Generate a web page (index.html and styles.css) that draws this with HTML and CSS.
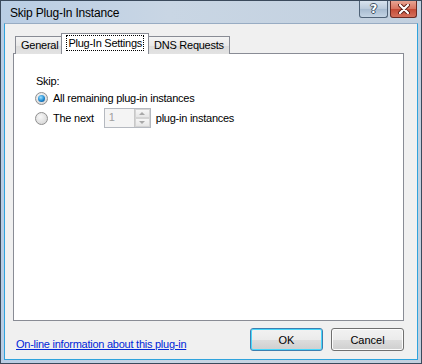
FILE: index.html
```html
<!DOCTYPE html>
<html lang="en">
<head>
  <meta charset="UTF-8" />
  <title>Skip Plug-In Instance</title>
  <link rel="stylesheet" href="styles.css">
</head>
<body>
  <div class="window">
    <div class="titlebar">
      <span class="title">Skip Plug-In Instance</span>
      <div class="caption-btns">
        <span class="cap-btn help">?</span>
        <span class="cap-btn close">
          <svg width="12" height="10" viewBox="0 0 12 10">
            <path d="M2 1 L10 9 M10 1 L2 9" stroke="#5a1a12" stroke-width="4" stroke-linecap="round"/>
            <path d="M2 1 L10 9 M10 1 L2 9" stroke="#fff" stroke-width="2.2" stroke-linecap="round"/>
          </svg>
        </span>
      </div>
    </div>

    <div class="client">
      <div class="tabs">
        <div class="tab">General</div>
        <div class="tab active"><span class="focus">Plug-In Settings</span></div>
        <div class="tab">DNS Requests</div>
      </div>

      <div class="panel">
        <div class="label">Skip:</div>
        <div class="row">
          <span class="radio checked"></span>
          <span>All remaining plug-in instances</span>
        </div>
        <div class="row">
          <span class="radio"></span>
          <span class="next">The next</span>
          <span class="spin">
            <span class="spin-val">1</span>
            <span class="spin-btns">
              <span class="arrow up"></span>
              <span class="arrow down"></span>
            </span>
          </span>
          <span>plug-in instances</span>
        </div>
      </div>

      <div class="footer">
        <a class="link" href="#">On-line information about this plug-in</a>
        <div class="buttons">
          <button class="btn default">OK</button>
          <button class="btn">Cancel</button>
        </div>
      </div>
    </div>
  </div>
</body>
</html>
```
FILE: styles.css
```css
* { box-sizing: border-box; margin: 0; padding: 0 }
html, body {
  width: 422px; height: 364px;
  overflow: hidden;
  background: #fff;
  font-family: 'Liberation Sans', Arial, sans-serif;
  font-size: 11px;
  letter-spacing: -0.25px;
  color: #000;
}

/*–––– Window frame ––––*/
.window {
  width: 422px; height: 364px;
  display: flex; flex-direction: column;
  border: 1px solid #3b4a5c;
  background: linear-gradient(90deg, #b9cde4, #c9d6e4 40%, #c2d0df);
  padding: 0 3px 3px 3px;
}
.titlebar {
  height: 22px;
  display: flex; align-items: flex-start;
  padding-left: 6px;
}
.title {
  font-size: 12px;
  letter-spacing: -0.2px;
  margin-top: 5px;
  color: #000;
}
.caption-btns {
  margin-left: auto;
  display: flex; gap: 2px;
  margin-right: 1px;
}
.cap-btn {
  height: 17px;
  display: flex; align-items: center; justify-content: center;
  border: 1px solid #4f6277;
  border-top: none;
  border-radius: 0 0 3px 3px;
}
.help {
  width: 29px;
  background: linear-gradient(#d8e3ee, #b9c9da 50%, #a7bbd0 51%, #c4d4e4);
  color: #fff;
  font-family: 'DejaVu Sans', sans-serif;
  font-weight: bold;
  font-size: 12px;
  text-shadow: -1px 0 #3e4f62, 1px 0 #3e4f62, 0 -1px #3e4f62, 0 1px #3e4f62;
}
.close {
  width: 27px;
  border-color: #6b2a22;
  background: linear-gradient(#e8a493, #d8725e 50%, #c44a35 51%, #d4705c);
}

/*–––– Client area ––––*/
.client {
  flex: 1;
  display: flex; flex-direction: column;
  background: #f0f0f0;
  border: 1px solid #2fa3dd;
  border-top-color: #98acc3;
  padding: 9px 13px 8px 8px;
}

/*–––– Tabs ––––*/
.tabs {
  display: flex; align-items: flex-end;
  padding-left: 2px;
  height: 21px;
  position: relative; z-index: 1;
  margin-bottom: -1px;
}
.tab {
  height: 18px;
  padding: 2px 5px 0 5px;
  border: 1px solid #898c95;
  border-bottom: none;
  margin-right: -1px;
  background: linear-gradient(#f4f4f4, #e9e9e9 50%, #dcdcdc 51%, #e3e3e3);
}
.tab.active {
  height: 21px;
  margin: 0 -1px 0 -2px;
  padding: 2px 5px 0 5px;
  background: #fff;
}
.focus {
  display: inline-block;
  outline: 1px dotted #000;
  padding: 0 1px;
  line-height: 14px;
}

.panel {
  flex: 1;
  background: #fff;
  border: 1px solid #898c95;
  padding: 21px 22px;
}
.label { margin-bottom: 0; line-height: 13px; }
.row {
  display: flex; align-items: center;
  height: 20px;
}
.row span { white-space: nowrap; }

/*–––– Radio ––––*/
.radio {
  width: 13px; height: 13px;
  flex: none;
  border-radius: 50%;
  border: 1px solid #8f8f8f;
  background: radial-gradient(circle at 40% 35%, #f8f8f8, #dcdcdc 70%, #c8c8c8);
  margin: 0 5px 0 -1px;
  display: flex; align-items: center; justify-content: center;
}
.radio.checked::after {
  content: '';
  width: 7px; height: 7px;
  border-radius: 50%;
  background: radial-gradient(circle at 40% 35%, #9fe0ff, #1d8ad1 55%, #0d3d7a);
}

/*–––– Spinner ––––*/
.next { margin-right: 10px; }
.spin {
  width: 47px; height: 20px;
  flex: none;
  display: flex;
  border: 1px solid #b5b9c0;
  background: #f4f4f4;
  margin-right: 5px;
}
.spin-val {
  flex: 1;
  color: #a0a0a0;
  padding: 2px 0 0 4px;
}
.spin-btns {
  width: 16px;
  display: flex; flex-direction: column;
  border-left: 1px solid #c8c8c8;
}
.arrow {
  flex: 1;
  display: flex; align-items: center; justify-content: center;
  border: 1px solid #d4d4d4;
  background: linear-gradient(#f6f6f6, #e6e6e6);
}
.arrow::after {
  content: '';
  border-left: 3px solid transparent;
  border-right: 3px solid transparent;
}
.arrow.up::after { border-bottom: 3px solid #a8a8a8; }
.arrow.down::after { border-top: 3px solid #a8a8a8; }

/*–––– Footer ––––*/
.footer {
  display: flex; align-items: center;
  margin-top: 7px;
  padding-left: 3px;
  height: 23px;
}
.link {
  color: #0026d8;
  text-decoration: underline;
  margin-top: 9px;
}
.buttons {
  margin-left: auto;
  display: flex; gap: 8px;
}
.btn {
  width: 73px; height: 23px;
  font: inherit;
  border: 1px solid #707070;
  border-radius: 3px;
  background: linear-gradient(#f2f2f2, #ebebeb 50%, #dddddd 51%, #cfcfcf);
  box-shadow: inset 0 0 0 1px #fcfcfc;
}
.btn.default {
  border-color: #3c7fb1;
  box-shadow: inset 0 0 0 1px #48d7fb;
}
```
